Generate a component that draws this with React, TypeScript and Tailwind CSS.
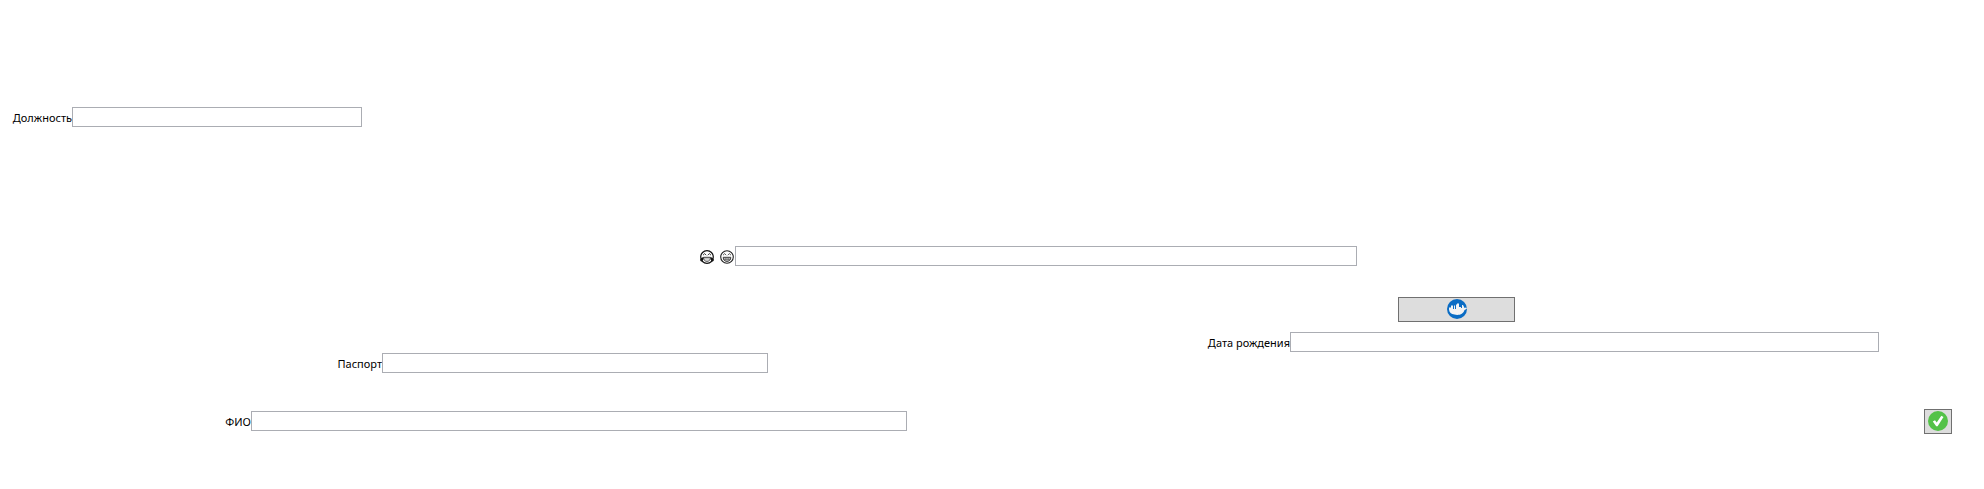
import { useId, type ReactNode } from "react";

type FieldProps = { label: ReactNode; className: string };

function Field({ label, className }: FieldProps) {
  const id = useId();
  return (
    <div className={`grid h-5 ${className}`}>
      <label
        htmlFor={id}
        className="col-start-2 flex h-5 items-center justify-end pt-0.5 text-[11px] leading-5 whitespace-nowrap"
      >
        {label}
      </label>
      <input
        id={id}
        type="text"
        className="h-5 w-full min-w-0 border border-[#abadb3] bg-white px-1 text-[11px] outline-none focus:border-[#569de5]"
      />
    </div>
  );
}

function IconButton({ label, className, children }: { label: string; className: string; children: ReactNode }) {
  return (
    <button
      type="button"
      aria-label={label}
      className={`flex h-[25px] items-start justify-center border border-[#707070] bg-[#dddddd] pt-px hover:bg-[#bee6fd] ${className}`}
    >
      {children}
    </button>
  );
}

function JoyFace() {
  return (
    <svg viewBox="0 0 14 14" className="size-3.5" role="img" aria-label="😂">
      <circle cx="7" cy="7" r="6.300" fill="#fff" stroke="#111" strokeWidth="1.200" />
      <path d="M3 5.200 4.700 3.600l1.500 1.600M7.800 5.200 9.300 3.600 11 5.200" fill="none" stroke="#222" strokeWidth=".9" />
      <path d="M3.500 7.300h7c0 2.500-1.300 4-3.500 4s-3.500-1.500-3.500-4Z" fill="#fff" stroke="#222" strokeWidth=".9" />
      <path d="M3.800 8.400h6.400v1H3.800Z" fill="#999" />
      <path d="M.2 10C.2 8.700 1.500 7.600 3.300 7.300c.3 2-.3 3.900-1.700 4.100C.8 11.500.2 10.900.2 10ZM13.800 10c0-1.300-1.300-2.400-3.100-2.700-.3 2 .3 3.900 1.700 4.100.8.1 1.400-.5 1.400-1.400Z" fill="#111" />
    </svg>
  );
}

function GrinFace() {
  return (
    <svg viewBox="0 0 14 14" className="size-3.5" role="img" aria-label="😁">
      <circle cx="7" cy="7" r="6.300" fill="#fff" stroke="#222" strokeWidth="1.100" />
      <path d="M3 5.200 4.700 3.600l1.500 1.600M7.800 5.200 9.300 3.600 11 5.200" fill="none" stroke="#333" strokeWidth=".8" />
      <path d="M3.200 7.300h7.600c0 2.500-1.500 4.100-3.800 4.100S3.200 9.800 3.200 7.300Z" fill="#fff" stroke="#222" strokeWidth=".9" />
      <path d="M3.400 9.200h7.200M5.200 7.500v3.400M7 7.500v3.800M8.800 7.500v3.400" fill="none" stroke="#444" strokeWidth=".7" />
    </svg>
  );
}

function WhaleIcon() {
  return (
    <svg viewBox="0 0 20 20" className="size-5" aria-hidden="true">
      <circle cx="10" cy="10" r="10" fill="#0a6cc4" />
      <path
        d="M2 10.500V8.500h2V6.500h2v3.500h1V6.500h1v3.500h1V5.500h1V4.500h2v3.500h2v1h1V6h1l.8 1.500.7 1.500 1.500-.5 1 .7-1 1-1.500.7c-.5 1.800-1.500 3-2.700 3.800-2 1.300-5 1.500-7.300.8C4 15.300 2.300 13.500 2 10.500Z"
        fill="#f3f3f3"
      />
    </svg>
  );
}

function CheckIcon() {
  return (
    <svg viewBox="0 0 20 20" className="size-5" aria-hidden="true">
      <circle cx="10" cy="10" r="10" fill="#54c248" />
      <path d="M4.800 10.500 7 9.200l1.700 2.300L13.300 4.800l2.200 1.200L9.600 15.300H8.200Z" fill="#fff" />
    </svg>
  );
}

export default function App() {
  return (
    <main className="min-h-screen bg-white pt-[107px] font-['Noto_Sans','Open_Sans',sans-serif] text-black">
      <Field label="Должность" className="grid-cols-[11fr_61px_290fr_1622fr]" />
      <Field
        label={
          <span className="flex gap-1.5 pr-px">
            <JoyFace />
            <GrinFace />
          </span>
        }
        className="mt-[119px] grid-cols-[699fr_36px_622fr_627fr]"
      />
      <div className="mt-[31px] grid grid-cols-[1398fr_117fr_469fr]">
        <IconButton label="Docker" className="col-start-2">
          <WhaleIcon />
        </IconButton>
      </div>
      <Field label="Дата рождения" className="mt-2.5 grid-cols-[1205fr_85px_589fr_105fr]" />
      <Field label="Паспорт" className="mt-px grid-cols-[336fr_46px_386fr_1216fr]" />
      <div className="mt-9 grid grid-cols-[1924fr_28px_32fr] items-start">
        <div className="pt-0.5">
          <Field label="ФИО" className="grid-cols-[224fr_27px_656fr_1017fr]" />
        </div>
        <IconButton label="OK" className="w-7">
          <CheckIcon />
        </IconButton>
      </div>
    </main>
  );
}
